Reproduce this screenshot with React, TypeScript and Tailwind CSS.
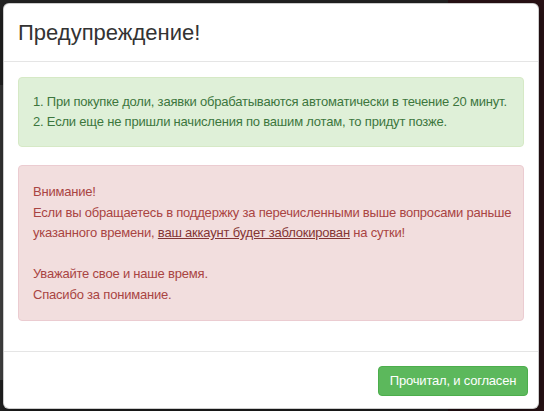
import React from "react";

export default function App() {
  return (
    <div
      className="relative w-[544px] h-[411px] overflow-hidden bg-[#242424]"
      style={{ fontFamily: '"Liberation Sans", Arial, sans-serif' }}
    >
      {/* backdrop hints */}
      <div className="absolute right-0 top-0 w-[96px] h-[411px] bg-[#2a1216]" />
      <div className="absolute left-0 top-[85px] w-[3px] h-[155px] bg-[#3a3a3a]" />
      <div className="absolute left-0 top-[240px] w-[3px] h-[140px] bg-[#4a4a4a]" />

      <div className="relative pl-[3px] pt-[3px]">
        <div className="w-[536px] h-[406px] bg-white rounded-[6px] border border-black/20 shadow-[0_5px_15px_rgba(0,0,0,0.5)] flex flex-col overflow-hidden">
          {/* header */}
          <div className="h-[58px] px-[14px] flex items-center border-b border-[#e5e5e5] shrink-0">
            <h4 className="text-[22px] leading-[26px] text-[#333] font-normal">Предупреждение!</h4>
          </div>

          {/* body */}
          <div className="px-[14px] pt-[15px] pb-[30px] flex flex-col gap-[18px] text-[13px] leading-[20px] tracking-[-0.2px]">
            <div className="bg-[#dff0d8] border border-[#d6e9c6] text-[#3c763d] rounded-[4px] px-[14px] py-[14px] whitespace-nowrap">
              1. При покупке доли, заявки обрабатываются автоматически в течение 20 минут.
              <br />
              2. Если еще не пришли начисления по вашим лотам, то придут позже.
            </div>
            <div className="bg-[#f2dede] border border-[#ebccd1] text-[#a94442] rounded-[4px] px-[14px] pt-[16px] pb-[15px] leading-[20.5px] whitespace-nowrap">
              Внимание!
              <br />
              Если вы обращаетесь в поддержку за перечисленными выше вопросами раньше
              <br />
              указанного времени, <span className="underline text-[#843534]">ваш аккаунт будет заблокирован</span> на сутки!
              <br />
              <br />
              Уважайте свое и наше время.
              <br />
              Спасибо за понимание.
            </div>
          </div>

          {/* footer */}
          <div className="border-t border-[#e5e5e5] px-[10px] pt-[14px] flex justify-end">
            <button className="h-[30px] w-[150px] bg-[#5cb85c] border border-[#4cae4c] rounded-[4px] text-white text-[13px] leading-[20px] tracking-[-0.2px]">
              Прочитал, и согласен
            </button>
          </div>
        </div>
      </div>
    </div>
  );
}
